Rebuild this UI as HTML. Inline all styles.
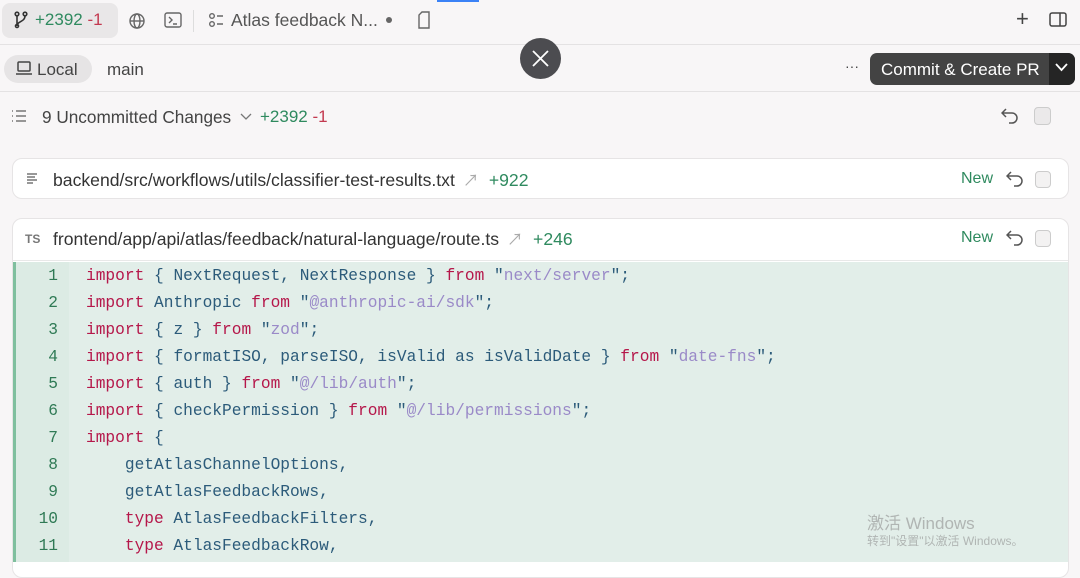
<!DOCTYPE html>
<html><head><meta charset="utf-8"><style>
*{margin:0;padding:0;box-sizing:border-box}
body{width:1080px;height:560px;overflow:hidden;background:#f8f6f7;font-family:"Liberation Sans","Noto Sans CJK SC",sans-serif;color:#333;position:relative}
.a{position:absolute}
.g{color:#2f8a5f}.r{color:#c33950}
.code{font-family:"Liberation Mono",monospace;font-size:16.2px;color:#2c5b7a}
.ln{position:absolute;left:14px;width:44px;text-align:right;color:#2f7a55}
.tx{position:absolute;left:86px;white-space:pre}
.k{color:#b5174a}.s{color:#9a8ac8}
.arr{color:#aaa;font-size:16px;margin:0 10px 0 8px}
</style></head><body>
<div class="a" style="left:437px;top:0;width:42px;height:2px;background:#3b82f6"></div>
<div class="a" style="left:2px;top:3px;width:116px;height:35px;background:#e9e7e8;border-radius:8px"></div>
<svg class="a" style="left:12px;top:10px" width="18" height="20" viewBox="0 0 18 20" fill="none" stroke="#333" stroke-width="1.6"><circle cx="5" cy="4" r="1.8"/><circle cx="13" cy="4" r="1.8"/><path d="M5 6v10M13 6c0 6-8 5-8 10"/><circle cx="5" cy="16" r="1.5"/></svg>
<div class="a" style="left:35px;top:10px;font-size:17px"><span class="g">+2392</span> <span class="r">-1</span></div>
<svg class="a" style="left:128px;top:12px" width="18" height="18" viewBox="0 0 18 18" fill="none" stroke="#666" stroke-width="1.4"><circle cx="9" cy="9" r="7"/><ellipse cx="9" cy="9" rx="3" ry="7"/><path d="M2 9h14"/></svg>
<svg class="a" style="left:164px;top:12px" width="18" height="16" viewBox="0 0 18 16" fill="none" stroke="#666" stroke-width="1.4"><rect x="1" y="1" width="16" height="14" rx="2"/><path d="M5 5l3 3-3 3M9 12h4"/></svg>
<div class="a" style="left:193px;top:10px;width:1px;height:22px;background:#ddd"></div>
<svg class="a" style="left:208px;top:12px" width="16" height="16" viewBox="0 0 16 16" fill="none" stroke="#666" stroke-width="1.4"><circle cx="4" cy="4" r="2.3"/><circle cx="4" cy="12" r="2.3"/><path d="M9 4h6M9 12h6"/></svg>
<div class="a" style="left:231px;top:10px;font-size:17.5px;color:#555">Atlas feedback N...</div>
<div class="a" style="left:386px;top:17px;width:6px;height:6px;border-radius:50%;background:#666"></div>
<svg class="a" style="left:417px;top:11px" width="14" height="18" viewBox="0 0 14 18" fill="none" stroke="#666" stroke-width="1.4"><path d="M5 1h7v16H2V4z"/></svg>
<div class="a" style="left:1016px;top:6px;font-size:22px;color:#444">+</div>
<svg class="a" style="left:1049px;top:12px" width="18" height="16" viewBox="0 0 18 16" fill="none" stroke="#444" stroke-width="1.5"><rect x="1" y="1" width="16" height="13" rx="2"/><path d="M11 1v13"/></svg>
<div class="a" style="left:0;top:44px;width:1080px;height:1px;background:#e4e2e3"></div>
<div class="a" style="left:4px;top:55px;width:88px;height:28px;background:#e6e4e5;border-radius:14px"></div>
<svg class="a" style="left:15px;top:61px" width="18" height="15" viewBox="0 0 18 15" fill="none" stroke="#444" stroke-width="1.5"><rect x="3" y="1" width="12" height="9" rx="1"/><path d="M1 13h16"/></svg>
<div class="a" style="left:37px;top:60px;font-size:17px;color:#444">Local</div>
<div class="a" style="left:107px;top:60px;font-size:17px;color:#444">main</div>
<div class="a" style="left:520px;top:38px;width:41px;height:41px;border-radius:50%;background:#4c4c50"></div>
<svg class="a" style="left:531px;top:49px" width="19" height="19" viewBox="0 0 19 19" stroke="#fff" stroke-width="1.8"><path d="M2 2l15 15M17 2L2 17"/></svg>
<div class="a" style="left:845px;top:58px;font-size:14px;color:#444">···</div>
<div class="a" style="left:870px;top:53px;width:205px;height:32px;background:#434343;border-radius:7px;overflow:hidden"><div class="a" style="right:0;top:0;width:26px;height:32px;background:#252525"></div></div>
<div class="a" style="left:881px;top:60px;font-size:17px;color:#fff">Commit &amp; Create PR</div>
<svg class="a" style="left:1055px;top:63px" width="13" height="9" viewBox="0 0 13 9" fill="none" stroke="#fff" stroke-width="1.8"><path d="M1 1l5.5 6L12 1"/></svg>
<div class="a" style="left:0;top:91px;width:1080px;height:1px;background:#e4e2e3"></div>
<svg class="a" style="left:11px;top:110px" width="16" height="13" viewBox="0 0 16 13" stroke="#777" stroke-width="1.4"><path d="M1 1h1M5 1h10M1 6h1M5 6h10M1 11h1M5 11h10"/></svg>
<div class="a" style="left:42px;top:107px;font-size:17.2px;color:#444">9 Uncommitted Changes</div>
<svg class="a" style="left:240px;top:113px" width="12" height="8" viewBox="0 0 12 8" fill="none" stroke="#777" stroke-width="1.3"><path d="M1 1l5 5 5-5"/></svg>
<div class="a" style="left:260px;top:107px;font-size:17px"><span class="g">+2392</span> <span class="r">-1</span></div>
<svg class="a" style="left:1001px;top:108px" width="18" height="16" viewBox="0 0 18 16" fill="none" stroke="#555" stroke-width="1.5"><path d="M5 1L1 5l4 4M1 5h10a5 5 0 010 10H8"/></svg>
<div class="a" style="left:1034px;top:107px;width:17px;height:18px;border:1.5px solid #ccc;border-radius:4px;background:#ebe9ea"></div>

<div class="a" style="left:12px;top:158px;width:1057px;height:41px;background:#fff;border:1px solid #e6e4e5;border-radius:10px"></div>
<svg class="a" style="left:26px;top:173px" width="12" height="11" viewBox="0 0 12 11" stroke="#777" stroke-width="1.4"><path d="M1 1h10M1 4h8M1 7h10M1 10h6"/></svg>
<div class="a" style="left:53px;top:167px;font-size:17.6px;color:#333;white-space:nowrap">backend/src/workflows/utils/classifier-test-results.txt<span class="arr">↗</span><span class="g">+922</span></div>
<div class="a g" style="left:961px;top:170px;font-size:16px">New</div>
<svg class="a" style="left:1006px;top:171px" width="18" height="16" viewBox="0 0 18 16" fill="none" stroke="#555" stroke-width="1.5"><path d="M5 1L1 5l4 4M1 5h10a5 5 0 010 10H8"/></svg>
<div class="a" style="left:1035px;top:171px;width:16px;height:17px;border:1.5px solid #ccc;border-radius:4px;background:#f3f2f2"></div>

<div class="a" style="left:12px;top:218px;width:1057px;height:360px;background:#fff;border:1px solid #e6e4e5;border-radius:10px"></div>
<div class="a" style="left:25px;top:232px;font-size:12px;color:#777;font-weight:bold">TS</div>
<div class="a" style="left:53px;top:226px;font-size:17.6px;color:#333;white-space:nowrap">frontend/app/api/atlas/feedback/natural-language/route.ts<span class="arr">↗</span><span class="g">+246</span></div>
<div class="a g" style="left:961px;top:229px;font-size:16px">New</div>
<svg class="a" style="left:1006px;top:230px" width="18" height="16" viewBox="0 0 18 16" fill="none" stroke="#555" stroke-width="1.5"><path d="M5 1L1 5l4 4M1 5h10a5 5 0 010 10H8"/></svg>
<div class="a" style="left:1035px;top:230px;width:16px;height:17px;border:1.5px solid #ccc;border-radius:4px;background:#f3f2f2"></div>
<div class="a" style="left:13px;top:260px;width:1055px;height:1px;background:#e8e8e8"></div>
<div class="a" style="left:13px;top:262px;width:1055px;height:300px;background:#e2eee9"></div>
<div class="a" style="left:13px;top:262px;width:3px;height:300px;background:#7fbf9e"></div>
<div class="a" style="left:16px;top:262px;width:53px;height:300px;background:#dcebe4"></div>
<div class="code">
<div class="ln" style="top:267px">1</div><div class="tx" style="top:267px"><span class="k">import</span> { NextRequest, NextResponse } <span class="k">from</span> "<span class="s">next/server</span>";</div>
<div class="ln" style="top:294px">2</div><div class="tx" style="top:294px"><span class="k">import</span> Anthropic <span class="k">from</span> "<span class="s">@anthropic-ai/sdk</span>";</div>
<div class="ln" style="top:321px">3</div><div class="tx" style="top:321px"><span class="k">import</span> { z } <span class="k">from</span> "<span class="s">zod</span>";</div>
<div class="ln" style="top:348px">4</div><div class="tx" style="top:348px"><span class="k">import</span> { formatISO, parseISO, isValid as isValidDate } <span class="k">from</span> "<span class="s">date-fns</span>";</div>
<div class="ln" style="top:375px">5</div><div class="tx" style="top:375px"><span class="k">import</span> { auth } <span class="k">from</span> "<span class="s">@/lib/auth</span>";</div>
<div class="ln" style="top:402px">6</div><div class="tx" style="top:402px"><span class="k">import</span> { checkPermission } <span class="k">from</span> "<span class="s">@/lib/permissions</span>";</div>
<div class="ln" style="top:429px">7</div><div class="tx" style="top:429px"><span class="k">import</span> {</div>
<div class="ln" style="top:456px">8</div><div class="tx" style="top:456px">    getAtlasChannelOptions,</div>
<div class="ln" style="top:483px">9</div><div class="tx" style="top:483px">    getAtlasFeedbackRows,</div>
<div class="ln" style="top:510px">10</div><div class="tx" style="top:510px">    <span class="k">type</span> AtlasFeedbackFilters,</div>
<div class="ln" style="top:537px">11</div><div class="tx" style="top:537px">    <span class="k">type</span> AtlasFeedbackRow,</div>
</div>
<div class="a" style="left:867px;top:509px;font-size:17px;color:#b0b5b3">激活 Windows</div>
<div class="a" style="left:867px;top:532px;font-size:12px;color:#b0b5b3">转到"设置"以激活 Windows。</div>
</body></html>
